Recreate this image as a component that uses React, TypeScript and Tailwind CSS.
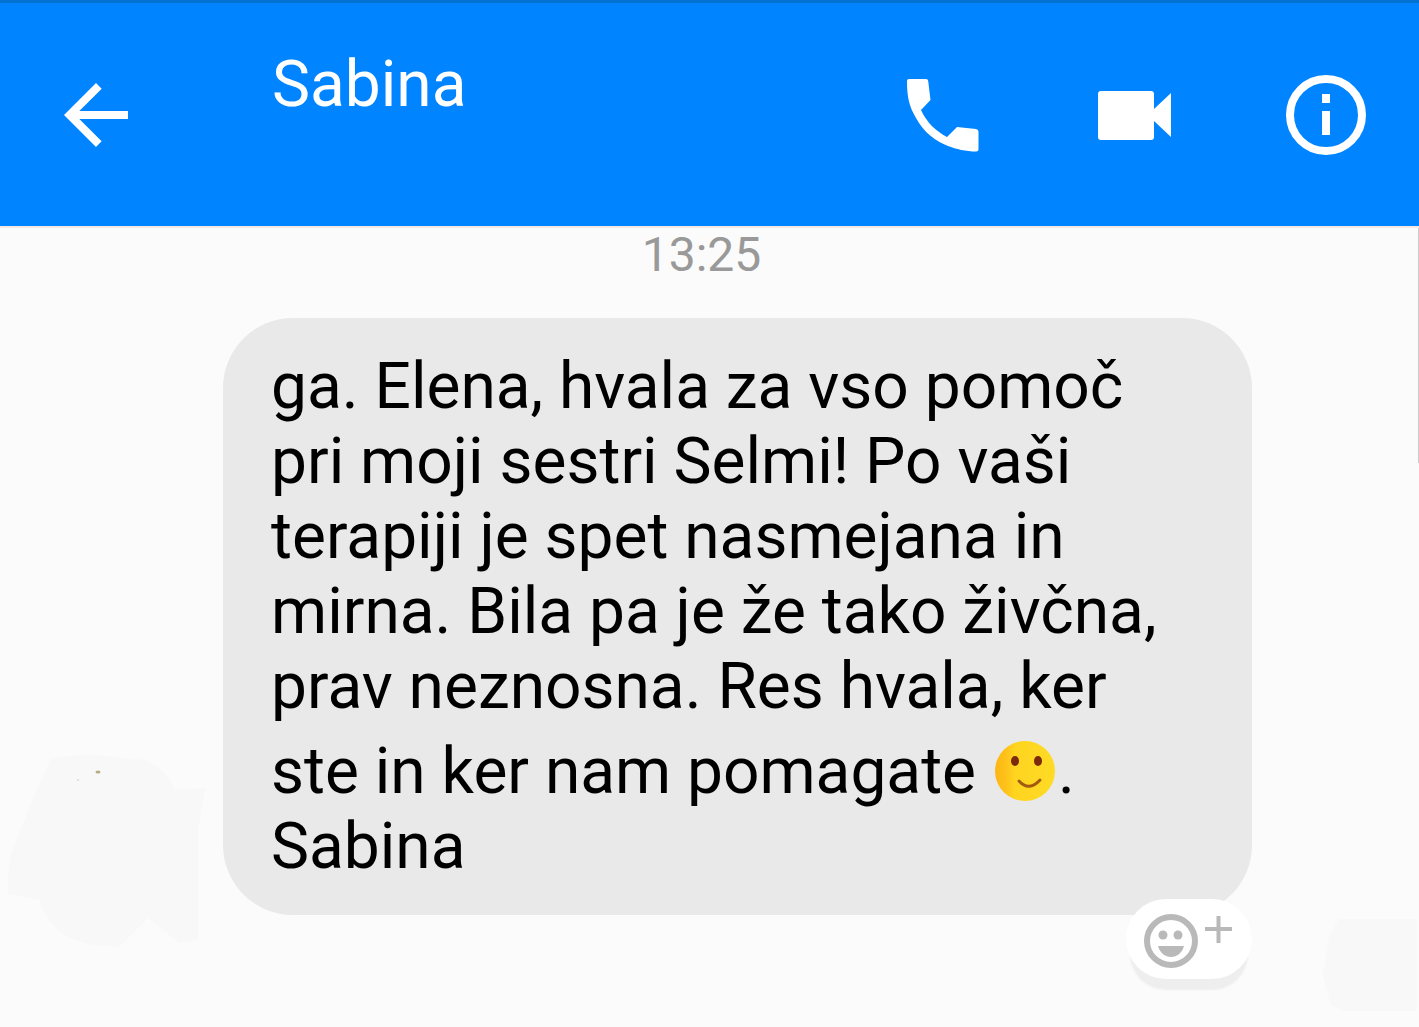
import React from 'react';

const MESSAGE =
  'ga. Elena, hvala za vso pomoč pri moji sestri Selmi! Po vaši terapiji je spet nasmejana in mirna. Bila pa je že tako živčna, prav neznosna. Res hvala, ker ste in ker nam pomagate ';

const BackIcon = () => (
  <svg viewBox="0 0 24 24" className="size-24" fill="currentColor" aria-hidden="true">
    <path d="M20 11H7.83l5.59-5.59L12 4l-8 8 8 8 1.41-1.41L7.83 13H20v-2z" />
  </svg>
);

const PhoneIcon = () => (
  <svg viewBox="0 0 96 96" className="size-24" fill="currentColor" aria-hidden="true">
    <path d="M15 12H32Q34 12 34.2 14L36.5 33L27 43C33 56 42 64 53 70L63 60L82 62Q84.5 62.500 84.5 64.500V82Q84.5 84.5 82 84.5C72 84.5 62 82 54 79C42 74 30 66 22 51C15 39 13 30 13 14Q13 12 15 12Z" />
  </svg>
);

const VideoIcon = () => (
  <svg viewBox="0 0 96 96" className="size-24" fill="currentColor" aria-hidden="true">
    <path d="M15 24H65Q68 24 68 27V42L85 26V70L68 54V70Q68 73 65 73H15Q12 73 12 70V27Q12 24 15 24Z" />
  </svg>
);

const InfoIcon = () => (
  <svg viewBox="0 0 96 96" className="size-24" aria-hidden="true">
    <circle cx="48" cy="48" r="36" fill="none" stroke="currentColor" strokeWidth="8" />
    <path d="M44 27h8v9h-8zM44 44h8v24h-8z" fill="currentColor" />
  </svg>
);

const Smile = () => (
  <svg
    viewBox="0 0 60 60"
    className="mx-[3px] mt-[17px] inline-block size-[60px] align-[-8px]"
    role="img"
    aria-label="smile"
  >
    <defs>
      <linearGradient id="face" x1="0" y1="0" x2="1" y2="0">
        <stop offset="0" stopColor="#fdb515" />
        <stop offset="0.2" stopColor="#fec41a" />
        <stop offset="0.32" stopColor="#fed41f" />
        <stop offset="1" stopColor="#fedb25" />
      </linearGradient>
    </defs>
    <circle cx="30" cy="30" r="30" fill="url(#face)" />
    <ellipse cx="20" cy="20" rx="4" ry="5" fill="#7b2a0c" />
    <ellipse cx="43" cy="20" rx="4" ry="5" fill="#7b2a0c" />
    <path d="M24 40Q34 51 45 39" fill="none" stroke="#a35a10" strokeWidth="3" strokeLinecap="round" />
  </svg>
);

const ReactionIcon = () => (
  <svg viewBox="0 0 94 60" className="h-[60px] w-[94px]" aria-hidden="true">
    <circle cx="29" cy="32" r="24" fill="none" stroke="#b9b9b9" strokeWidth="6" />
    <circle cx="21" cy="26" r="4.500" fill="#b9b9b9" />
    <circle cx="36" cy="26" r="4.500" fill="#b9b9b9" />
    <path d="M16 37H42C40 44 35 48 29 48S18 44 16 37Z" fill="#b9b9b9" />
    <path d="M63 20H90M76.5 7V34" stroke="#b9b9b9" strokeWidth="4" />
  </svg>
);

const Smudges = () => (
  <>
    <svg viewBox="0 0 210 200" className="absolute left-0 top-[522px] w-[210px]" aria-hidden="true">
      <path
        d="M50 10Q80 2 105 6L145 10Q170 22 174 40L205 38L198 80V190L180 193L148 168L120 196Q90 198 66 186Q44 170 40 150L8 144Q6 110 18 86Q28 60 50 10Z"
        fill="#f8f8f8"
      />
      <ellipse cx="98" cy="22" rx="2.500" ry="1.500" fill="#b5ad84" />
      <circle cx="78" cy="30" r="1" fill="#dcdccf" />
    </svg>
    <svg viewBox="0 0 100 100" className="absolute bottom-3 right-0 w-[100px]" aria-hidden="true">
      <path d="M20 4H98V96H24L12 90L4 60L10 22Z" fill="#f8f8f8" />
    </svg>
  </>
);

const App: React.FC = () => {
  return (
    <div className="min-h-screen flex flex-col bg-[#fbfbfb] font-[Roboto,'Liberation_Sans',sans-serif]">
      {/* Header */}
      <header className="flex items-center bg-[#0084ff] border-t-3 border-t-[#0273d0] border-b-2 border-b-[#f5e8e4] pl-12 pr-[45px] pt-11 pb-[63px] text-white">
        <button type="button" aria-label="Nazaj" className="mt-5">
          <BackIcon />
        </button>
        <h1 className="ml-32 flex-1 self-start text-[64px] leading-[75px]">Sabina</h1>
        <div className="mt-5 flex gap-24">
          <button type="button" aria-label="Klic">
            <PhoneIcon />
          </button>
          <button type="button" aria-label="Video klic">
            <VideoIcon />
          </button>
          <button type="button" aria-label="Informacije">
            <InfoIcon />
          </button>
        </div>
      </header>

      {/* Conversation */}
      <main className="relative flex-1">
        <Smudges />
        <div className="absolute right-0 top-0 h-[235px] w-px bg-[#cccccc]" />

        <time className="block pr-4 text-center text-[48px] leading-[54px] text-[#999999]">13:25</time>

        <div className="relative ml-[223px] mr-[167px] mt-9 rounded-[70px] bg-[#e9e9e9] pl-12 pr-14 py-[31px]">
          <p className="text-[64px] leading-[75px] text-black">
            {MESSAGE}
            <Smile />.
            <br />
            Sabina
          </p>
          <button
            type="button"
            aria-label="Dodaj odziv"
            className="absolute right-0 -bottom-16 flex h-20 w-[126px] items-center justify-center rounded-full bg-white shadow-[0_15px_2px_-4px_#eeeeee]"
          >
            <ReactionIcon />
          </button>
        </div>
      </main>
    </div>
  );
};

export default App;
